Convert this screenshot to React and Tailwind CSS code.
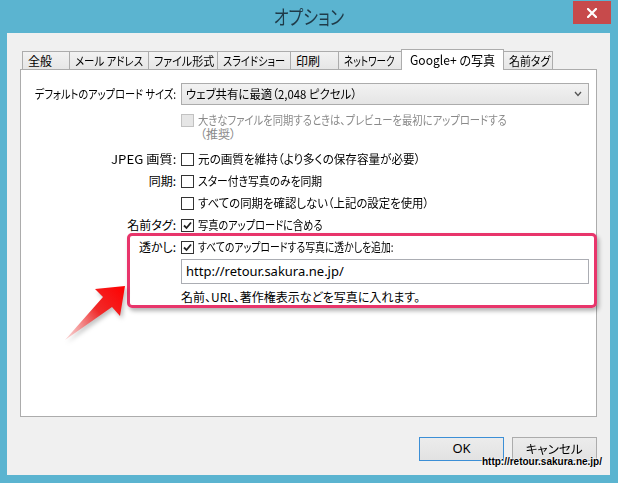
import React from "react";

const jp = "font-['Noto_Sans_CJK_JP',sans-serif] [font-feature-settings:'palt']";

function Check({ checked, disabled }) {
  return (
    <div
      className={`w-[13px] h-[13px] shrink-0 border flex items-center justify-center ${
        disabled ? "border-[#c2c2c2] bg-[#e6e6e6]" : "border-[#333333] bg-white"
      }`}
    >
      {checked && (
        <svg width="11" height="11" viewBox="0 0 11 11">
          <path d="M2 5.5 L4.5 8 L9 2.5" fill="none" stroke="#222" strokeWidth="1.8" />
        </svg>
      )}
    </div>
  );
}

function S({ c, children }) {
  return <span className={`inline-block whitespace-nowrap shrink-0 ${c}`}>{children}</span>;
}

function Row({ label, children, className = "" }) {
  return (
    <div className={`flex items-center h-[22px] ${className}`}>
      <div className="w-[156px] flex justify-end pr-[1px] whitespace-nowrap">{label}</div>
      <div className="ml-[4px] flex items-center gap-[4px]">{children}</div>
    </div>
  );
}

const tabs = [
  { t: "全般", w: 48, c: "origin-left" },
  { t: "メール アドレス", w: 80, c: "origin-left scale-x-[0.87]" },
  { t: "ファイル形式", w: 70, c: "origin-left scale-x-[0.92]" },
  { t: "スライドショー", w: 74, c: "origin-left scale-x-[0.85]" },
  { t: "印刷", w: 49, c: "origin-left" },
  { t: "ネットワーク", w: 64, c: "origin-left scale-x-[0.8]" },
  { t: "Google+ の写真", w: 103, sel: true, c: "origin-left scale-x-[0.93]" },
  { t: "名前タグ", w: 50, c: "origin-left scale-x-[0.91]" },
];

export default function App() {
  return (
    <div className={`relative w-[618px] h-[483px] bg-[#5bb4d0] flex flex-col overflow-hidden text-[12px] text-black ${jp}`}>
      {/* title bar */}
      <div className="relative h-[33px] shrink-0 flex items-center justify-center">
        <div className="text-[20px] text-[#1f3a48] pt-[1px] flex justify-center w-[90px]">
          <S c="origin-center scale-x-[0.8]">オプション</S>
        </div>
        <div className="absolute right-[7px] top-[1px] w-[38px] h-[23px] bg-[#c74a4b] flex items-center justify-center">
          <svg width="10" height="10" viewBox="0 0 10 10">
            <path d="M1 1 L9 9 M9 1 L1 9" stroke="white" strokeWidth="2.2" strokeLinecap="square" />
          </svg>
        </div>
      </div>

      {/* client */}
      <div className="ml-[7px] mr-[8px] mb-[8px] flex-1 bg-[#f0f0f0] flex flex-col px-[13px] pt-[15px]">
        {/* tabs */}
        <div className="flex items-end h-[21px] ml-[2px] relative z-10">
          {tabs.map((tb, i) => (
            <div
              key={i}
              style={{ width: tb.w }}
              className={`${i > 0 ? "-ml-px" : ""} shrink-0 border border-b-0 border-[#acacac] whitespace-nowrap flex items-center overflow-visible ${
                tb.sel
                  ? "h-[21px] bg-white relative z-10 -mb-px text-[13px] pl-[8px]"
                  : "h-[18px] bg-gradient-to-b from-[#f2f2f2] to-[#e6e6e6] pl-[5px]"
              }`}
            >
              <S c={tb.c}>{tb.t}</S>
            </div>
          ))}
        </div>

        {/* panel */}
        <div className="relative h-[348px] border border-[#acacac] bg-white flex flex-col pr-[7px]">
          <div className="flex items-center h-[22px] mt-[13px]">
            <div className="w-[156px] flex justify-end pr-[1px]">
              <S c="origin-right scale-x-[0.85]">デフォルトのアップロード サイズ:</S>
            </div>
            <div className="ml-[4px] flex-1 h-[22px] border border-[#acacac] bg-gradient-to-b from-[#f2f2f2] to-[#e5e5e5] flex items-center pl-[4px] pr-[6px]">
              <div className="flex-1">
                <S c="origin-left scale-x-[0.95]">ウェブ共有に最適（2,048 ピクセル）</S>
              </div>
              <svg width="8" height="6" viewBox="0 0 8 6">
                <path d="M1 1 L4 4.5 L7 1" fill="none" stroke="#555" strokeWidth="1.3" />
              </svg>
            </div>
          </div>

          <div className="flex mt-[8px]">
            <div className="w-[156px]" />
            <div className="ml-[4px] flex flex-col text-[#8a8a8a] leading-[14px]">
              <div className="flex items-center gap-[4px]">
                <Check disabled />
                <S c="origin-left scale-x-[0.86]">大きなファイルを同期するときは、プレビューを最初にアップロードする</S>
              </div>
              <div className="pl-[19px]">（推奨）</div>
            </div>
          </div>

          <Row label={<S c="origin-right scale-x-[1.1]">JPEG 画質:</S>} className="mt-[7px]">
            <Check />
            <S c="origin-left scale-x-[0.965]">元の画質を維持（より多くの保存容量が必要）</S>
          </Row>
          <Row label="同期:">
            <Check />
            <S c="origin-left scale-x-[0.9]">スター付き写真のみを同期</S>
          </Row>
          <Row label="">
            <Check />
            <S c="origin-left scale-x-[0.95]">すべての同期を確認しない（上記の設定を使用）</S>
          </Row>
          <Row label="名前タグ:">
            <Check checked />
            <S c="origin-left scale-x-[0.85]">写真のアップロードに含める</S>
          </Row>
          <Row label="透かし:">
            <Check checked />
            <S c="origin-left scale-x-[0.82]">すべてのアップロードする写真に透かしを追加:</S>
          </Row>
          <div className="flex mt-[1px]">
            <div className="w-[156px]" />
            <div className="ml-[4px] flex-1 h-[25px] border border-[#abadb3] bg-white flex items-center pl-[4px] text-[13px] font-['Noto_Sans',sans-serif]">
              http://retour.sakura.ne.jp/
            </div>
          </div>
          <div className="flex items-center h-[22px] mt-[2px]">
            <div className="w-[156px]" />
            <div className="ml-[4px]">名前、URL、著作権表示などを写真に入れます。</div>
          </div>

          {/* highlight */}
          <div className="absolute left-[106px] top-[163px] w-[470px] h-[75px] border-[3px] border-[#e8356b] rounded-[5px] shadow-[2px_3px_4px_rgba(0,0,0,0.3)]" />

          {/* arrow */}
          <svg className="absolute left-[39px] top-[212px]" width="72" height="64" viewBox="0 0 72 64" style={{ filter: "drop-shadow(2px 3px 2px rgba(0,0,0,0.25))" }}>
            <defs>
              <linearGradient id="ag" x1="65" y1="4" x2="4" y2="59" gradientUnits="userSpaceOnUse">
                <stop offset="0" stopColor="#ff0000" />
                <stop offset="0.45" stopColor="#f02a2a" />
                <stop offset="1" stopColor="#f7c5c5" stopOpacity="0.6" />
              </linearGradient>
            </defs>
            <polygon points="65,4 35,7 43,15 5,58 52,25 60,34" fill="url(#ag)" />
          </svg>
        </div>

        {/* buttons */}
        <div className="flex justify-end gap-[8px] mt-[20px] pr-0">
          <div className="w-[85px] h-[24px] border border-[#3c8fd6] bg-gradient-to-b from-[#ececec] to-[#e2e2e2] flex items-center justify-center text-[13px] font-['Noto_Sans',sans-serif]">
            OK
          </div>
          <div className="w-[85px] h-[24px] border border-[#acacac] bg-gradient-to-b from-[#ececec] to-[#e2e2e2] flex items-center justify-center">
            <S c="origin-center scale-x-[1.05]">キャンセル</S>
          </div>
        </div>
      </div>

      {/* watermark */}
      <div className="absolute right-[16px] bottom-[15px] text-[10px] leading-[12px] font-bold font-['Liberation_Sans',sans-serif] text-black [text-shadow:0_0_2px_#fff,0_0_2px_#fff,0_0_1px_#fff]">
        http://retour.sakura.ne.jp/
      </div>
    </div>
  );
}
